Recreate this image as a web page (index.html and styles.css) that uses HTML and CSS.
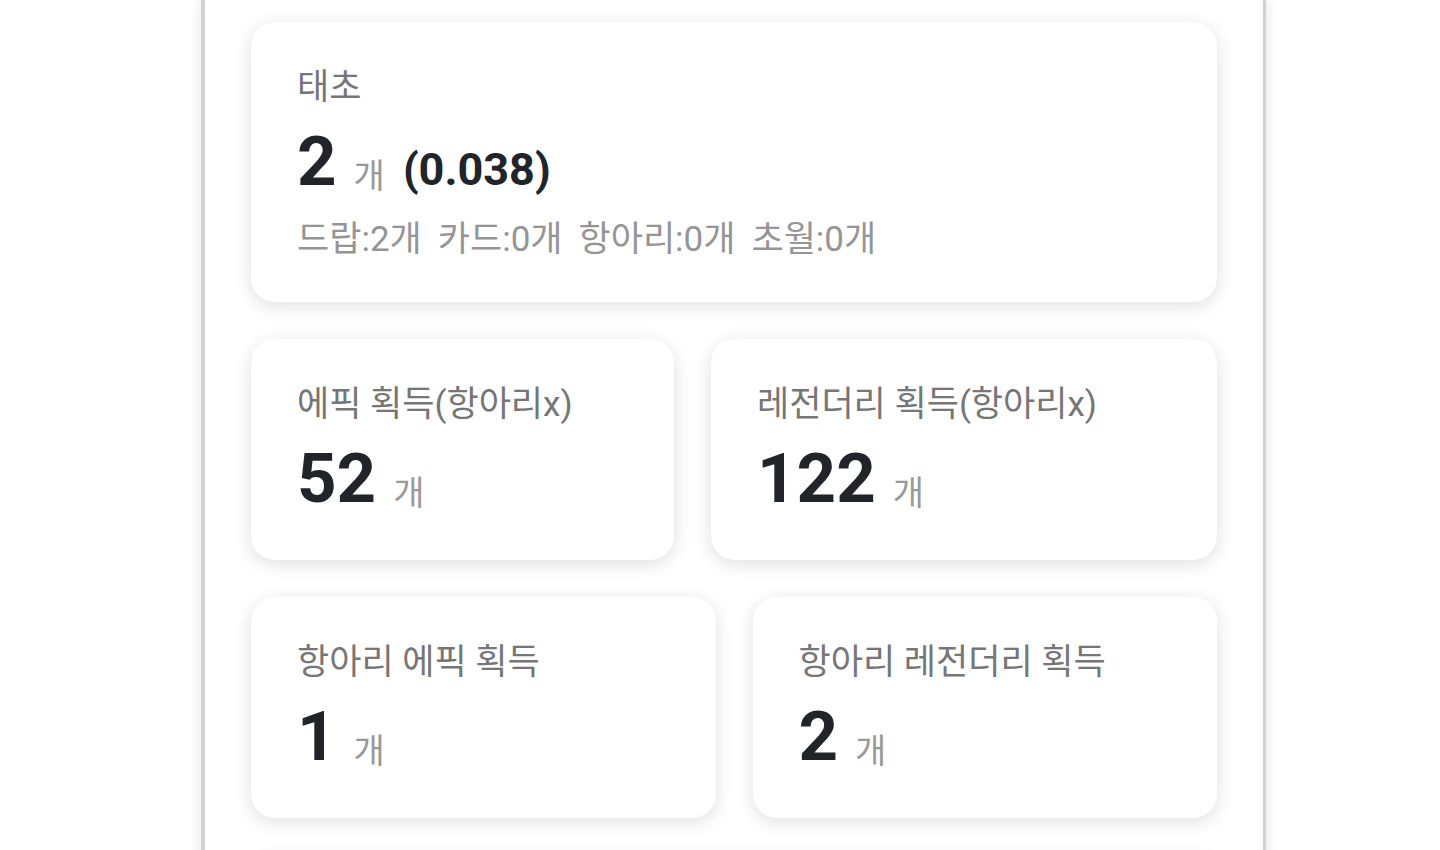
FILE: index.html
```html
<!DOCTYPE html>
<html lang="ko">
<head>
<meta charset="utf-8">
<title>통계</title>
<link rel="stylesheet" href="styles.css">
</head>
<body>
<main class="page">
  <section class="card card-main">
    <div class="label">태초</div>
    <div class="value-row">
      <span class="num">2</span>
      <span class="unit">개</span>
      <span class="ratio">(0.038)</span>
    </div>
    <div class="detail">
      <span>드랍:2개</span>
      <span>카드:0개</span>
      <span>항아리:0개</span>
      <span>초월:0개</span>
    </div>
  </section>

  <div class="row row-a">
    <section class="card">
      <div class="label">에픽 획득(항아리x)</div>
      <div class="value-row">
        <span class="num">52</span>
        <span class="unit">개</span>
      </div>
    </section>
    <section class="card">
      <div class="label">레전더리 획득(항아리x)</div>
      <div class="value-row">
        <span class="num">122</span>
        <span class="unit">개</span>
      </div>
    </section>
  </div>

  <div class="row row-b">
    <section class="card">
      <div class="label">항아리 에픽 획득</div>
      <div class="value-row">
        <span class="num">1</span>
        <span class="unit">개</span>
      </div>
    </section>
    <section class="card">
      <div class="label">항아리 레전더리 획득</div>
      <div class="value-row">
        <span class="num">2</span>
        <span class="unit">개</span>
      </div>
    </section>
  </div>

  <section class="card card-next">
    <div class="label">&nbsp;</div>
  </section>
</main>
</body>
</html>
```

FILE: styles.css
```css
html, body {
  margin: 0;
  padding: 0;
  background: #ffffff;
  height: 850px;
  overflow: hidden;
}

body {
  font-family: Roboto, "Noto Sans CJK KR", "Noto Sans", sans-serif;
  color: #212529;
}

.page {
  box-sizing: border-box;
  width: 1065px;
  margin-left: 201px;
  padding: 22px 46px 0 46px;
  background: #ffffff;
  border-left: 4px solid #d2d2d2;
  border-right: 3px solid #d2d2d2;
  box-shadow: 0 0 14px rgba(0, 0, 0, 0.10);
  min-height: 900px;
  display: flex;
  flex-direction: column;
  gap: 37px;
}

.card {
  box-sizing: border-box;
  background: #ffffff;
  border-radius: 24px;
  box-shadow: 0 4px 18px rgba(0, 0, 0, 0.13);
  padding: 42px 46px 0 46px;
  height: 221px;
}

.card-main {
  height: 280px;
}

.row {
  display: grid;
  column-gap: 37px;
}

.row-a {
  grid-template-columns: 423fr 506fr;
}

.row-b {
  grid-template-columns: 1fr 1fr;
}

.label {
  font-size: 35px;
  line-height: 48px;
  color: #767676;
}

.value-row {
  display: flex;
  align-items: baseline;
  margin-top: 12px;
  height: 76px;
}

.num {
  font-size: 69px;
  font-weight: 700;
  line-height: 76px;
  color: #212529;
}

.unit {
  font-size: 34px;
  color: #999999;
  margin-left: 17px;
  position: relative;
  top: 3px;
}

.ratio {
  font-size: 45px;
  font-weight: 700;
  color: #212529;
  margin-left: 18px;
}

.detail {
  display: flex;
  gap: 16px;
  font-size: 35px;
  line-height: 48px;
  color: #959595;
  margin-top: 16px;
}

.card-next {
  flex: none;
}
```
